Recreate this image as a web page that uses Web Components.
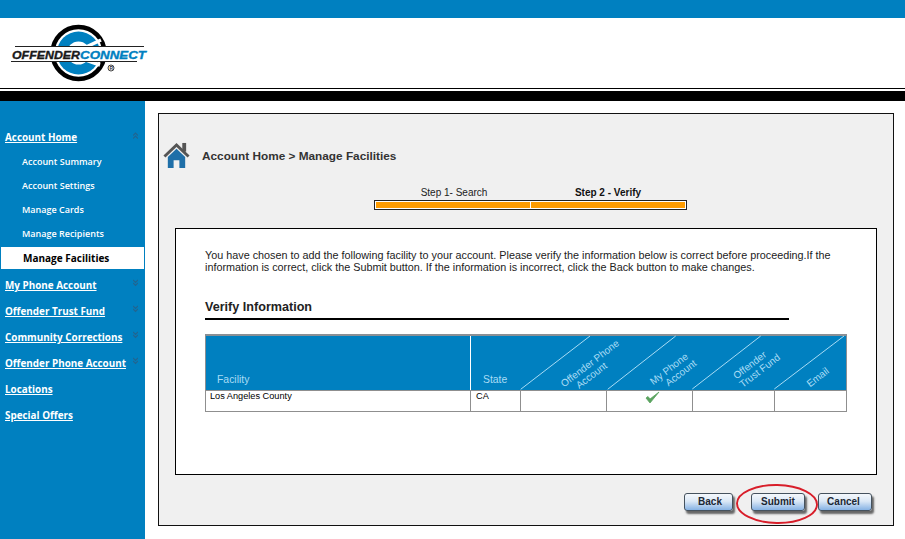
<!DOCTYPE html>
<html>
<head>
<meta charset="utf-8">
<title>Offender Connect</title>
<style>
  html, body { margin: 0; padding: 0; background: #fff; }
  body { width: 905px; height: 539px; overflow: hidden; font-family: "Liberation Sans", Arial, sans-serif; }
</style>
</head>
<body>
<oc-app>
  <oc-header slot="header"></oc-header>
  <oc-sidebar slot="nav">
    <oc-nav-item arrow="up">Account Home</oc-nav-item>
    <oc-nav-sub>Account Summary</oc-nav-sub>
    <oc-nav-sub>Account Settings</oc-nav-sub>
    <oc-nav-sub>Manage Cards</oc-nav-sub>
    <oc-nav-sub>Manage Recipients</oc-nav-sub>
    <oc-nav-sub active>Manage Facilities</oc-nav-sub>
    <oc-nav-item arrow="down">My Phone Account</oc-nav-item>
    <oc-nav-item arrow="down">Offender Trust Fund</oc-nav-item>
    <oc-nav-item arrow="down">Community Corrections</oc-nav-item>
    <oc-nav-item arrow="down">Offender Phone Account</oc-nav-item>
    <oc-nav-item>Locations</oc-nav-item>
    <oc-nav-item>Special Offers</oc-nav-item>
  </oc-sidebar>
  <oc-panel slot="main">
    <oc-steps></oc-steps>
    <oc-verify></oc-verify>
    <oc-actions></oc-actions>
  </oc-panel>
</oc-app>

<script>
// small helper, every element here is just a shadow root with fixed markup
function shadow(el, html) {
  el.attachShadow({ mode: "open" });
  el.shadowRoot.innerHTML = html;
}

class OcApp extends HTMLElement {
  connectedCallback() {
    shadow(this, `
      <style>
        :host { display: block; width: 905px; height: 539px; }
        .body { display: flex; height: 438px; }
      </style>
      <slot name="header"></slot>
      <div class="body">
        <slot name="nav"></slot>
        <slot name="main"></slot>
      </div>
    `);
  }
}

class OcHeader extends HTMLElement {
  connectedCallback() {
    shadow(this, `
      <style>
        :host { display: block; }
        .top { height: 18px; background: #0080c0; }
        .brand { height: 70px; box-sizing: border-box; padding: 0 0 0 7px; display: flex; align-items: flex-start; }
        .line { height: 1px; background: #000; }
        .gap { height: 2px; background: #fff; }
        .black { height: 10px; background: #000; }
        svg { display: block; }
        text { font-family: "Liberation Sans", Arial, sans-serif; font-weight: bold; font-style: italic; }
      </style>
      <div class="top"></div>
      <div class="brand">
        <svg width="148" height="70" viewBox="0 0 148 70">
          <circle cx="71.5" cy="35" r="26" fill="#fff" stroke="#000" stroke-width="4.5"/>
          <circle cx="71.5" cy="35" r="21.5" fill="#0080c0"/>
          <circle cx="71.5" cy="35" r="11.5" fill="#fff"/>
          <path d="M79 29L94 22M79 42L93 47" stroke="#fff" stroke-width="3.5" fill="none"/>
          <rect x="2" y="29" width="140" height="15" fill="#fff"/>
          <path d="M8 28.5H137M4 43.5H130" stroke="#222" stroke-width="1"/>
          <text x="5" y="41" font-size="11.5" fill="#1a1a1a" stroke="#1a1a1a" stroke-width=".35" textLength="68" lengthAdjust="spacingAndGlyphs">OFFENDER</text>
          <text x="73" y="41" font-size="11.5" fill="#0080c0" stroke="#0080c0" stroke-width=".35" textLength="66" lengthAdjust="spacingAndGlyphs">CONNECT</text>
          <circle cx="104" cy="50" r="3" fill="none" stroke="#444" stroke-width="1"/>
          <text x="102.4" y="52" font-size="5" fill="#333" style="font-style:normal">R</text>
        </svg>
      </div>
      <div class="line"></div>
      <div class="gap"></div>
      <div class="black"></div>
    `);
  }
}

class OcSidebar extends HTMLElement {
  connectedCallback() {
    shadow(this, `
      <style>
        :host { display: block; flex: 0 0 145px; height: 438px; background: #0080c0; box-sizing: border-box; padding-top: 23px; }
      </style>
      <slot></slot>
    `);
  }
}

class OcNavItem extends HTMLElement {
  connectedCallback() {
    const arrow = this.getAttribute("arrow");
    const d = arrow === "up" ? "M0 3.5L2.5 1L5 3.5M0 6.5L2.5 4L5 6.5" : "M0 1L2.5 3.5L5 1M0 4L2.5 6.5L5 4";
    const top = arrow === "up" ? 8 : 7;
    shadow(this, `
      <style>
        :host { display: flex; height: 26px; align-items: center; justify-content: space-between; padding: 0 7px 0 5px;
          font: bold 9.9px "Open Sans", Tahoma, sans-serif; color: #fff; position: relative; }
        a { color: #fff; text-decoration: underline; white-space: nowrap; }
        svg { position: absolute; right: 7px; top: ${top}px; }
      </style>
      <a href="#"><slot></slot></a>
      ${arrow ? `<svg width="5" height="8" viewBox="0 0 5 8"><path d="${d}" fill="none" stroke="#22648f" stroke-width="1.2"/></svg>` : ""}
    `);
  }
}

class OcNavSub extends HTMLElement {
  connectedCallback() {
    shadow(this, `
      <style>
        :host { display: flex; align-items: center; box-sizing: border-box; height: 24px; padding: 0 0 2px 22px; font: 600 9px "Open Sans", Tahoma, sans-serif; color: #fff; }
        :host([active]) { height: 22px; margin: 1px 1px 3px; padding: 0 0 0 22px; background: #fff; color: #000; font-weight: bold; font-size: 10px; }
      </style>
      <slot></slot>
    `);
  }
}

class OcPanel extends HTMLElement {
  connectedCallback() {
    shadow(this, `
      <style>
        :host { display: block; box-sizing: border-box; width: 736px; height: 413px; margin: 12px 0 0 13px;
          background: #f0f0f0; border: 1px solid #111; padding: 0 16px; }
        .crumb { display: flex; align-items: center; height: 83px; margin-left: -12px; font: bold 11.8px "Liberation Sans", Arial, sans-serif; color: #333; }
        .crumb svg { margin: 0 12px 0 0; display: block; }
      </style>
      <div class="crumb">
        <svg width="27" height="27" viewBox="0 0 28 28">
          <path d="M20 1h4v9h-4z" fill="#555"/>
          <path d="M1.5 15L14 3L26.5 15" fill="none" stroke="#555" stroke-width="3"/>
          <path d="M5 15.5L14 7L23 15.5V27H17V19H11V27H5Z" fill="#1f6fa8"/>
        </svg>
        Account Home &gt; Manage Facilities
      </div>
      <slot></slot>
    `);
  }
}

class OcSteps extends HTMLElement {
  connectedCallback() {
    shadow(this, `
      <style>
        :host { display: block; width: 313px; margin: -12px 0 0 199px; font: 10px "Liberation Sans", Arial, sans-serif; color: #222; }
        .labels { display: grid; grid-template-columns: 160px 148px; height: 14px; padding-bottom: 1px; align-items: center; text-align: center; }
        .b { font-weight: bold; color: #111; }
        .bar { display: flex; gap: 1px; height: 10px; box-sizing: border-box; border: 1px solid #222; background: #fff; padding: 1px; }
        .bar span { flex: 1; background: #ff9c00; }
      </style>
      <div class="labels"><span>Step 1- Search</span><span class="b">Step 2 - Verify</span></div>
      <div class="bar"><span></span><span></span></div>
    `);
  }
}

class OcVerify extends HTMLElement {
  connectedCallback() {
    shadow(this, `
      <style>
        :host { display: block; box-sizing: border-box; height: 247px; margin-top: 18px; background: #fff; border: 1px solid #000; padding: 21px 29px 0; font: 10px/11.5px "Liberation Sans", Arial, sans-serif; color: #222; }
        p { margin: 0; width: 640px; font-size: 10.8px; }
        h2 { margin: 26px 0 0; width: 584px; height: 21px; box-sizing: border-box; border-bottom: 2px solid #000; font: bold 12.6px/16px "Liberation Sans", Arial, sans-serif; color: #222; }
      </style>
      <p>You have chosen to add the following facility to your account. Please verify the information below is correct before proceeding.If the information is correct, click the Submit button. If the information is incorrect, click the Back button to make changes.</p>
      <h2>Verify Information</h2>
      <oc-facility-table></oc-facility-table>
    `);
  }
}

class OcFacilityTable extends HTMLElement {
  connectedCallback() {
    shadow(this, `
      <style>
        :host { display: block; position: relative; width: 642px; margin-top: 14px; font: 10.4px "Liberation Sans", Arial, sans-serif; }
        .head, .row { display: grid; grid-template-columns: 264px 50px 86px 86px 82px 72px; }
        .head { height: 56px; box-sizing: border-box; border: 1px solid #8a8f94; border-top-width: 2px; border-bottom: 0; background: #0080c0; color: #a9dcf5; }
        .head div { display: flex; align-items: flex-end; padding: 0 0 5px 11px; }
        .head .st { padding-left: 12px; border-left: 1px solid #fff; }
        .row { height: 22px; box-sizing: border-box; border: 1px solid #8f8f8f; font-size: 9.2px; color: #000; }
        .row div { border-left: 1px solid #8f8f8f; padding: 0 0 0 4px; line-height: 10px; position: relative; }
        .row div:first-child { border-left: 0; }
        .row .ca { padding-left: 5px; }
        svg.diag { position: absolute; left: 0; top: 0; pointer-events: none; overflow: visible; }
        svg.diag text { font-family: "Liberation Sans", Arial, sans-serif; font-size: 10px; fill: #a9dcf5; text-anchor: middle; }
        svg.check { position: absolute; left: 38px; top: 0; }
      </style>
      <div class="head"><div>Facility</div><div class="st">State</div><div></div><div></div><div></div><div></div></div>
      <div class="row">
        <div>Los Angeles County</div><div class="ca">CA</div><div></div>
        <div><svg class="check" width="15" height="14" viewBox="0 0 15 14"><path d="M1 7L5 12L14 1L5 8L3 5.5Z" fill="#5aa35f" stroke="#5aa35f" stroke-width=".8" stroke-linejoin="round"/></svg></div>
        <div></div><div></div>
      </div>
      <svg class="diag" width="642" height="56" viewBox="0 0 642 56">
        <path stroke="#a9dcf5" stroke-width="1" fill="none" d="M315.7 55.3L385 2M402.7 55.3L470.7 2M487.3 55L555.7 2M569.3 55L639 2"/>
        <text transform="translate(387 32) rotate(-37.5)"><tspan x="0" y="0">Offender Phone</tspan><tspan x="-6" y="10.5">Account</tspan></text>
        <text transform="translate(466 37.5) rotate(-37.5)"><tspan x="0" y="0">My Phone</tspan><tspan x="7" y="10.5">Account</tspan></text>
        <text transform="translate(546.8 33.8) rotate(-37.5)"><tspan x="0" y="0">Offender</tspan><tspan x="4.6" y="10.5">Trust Fund</tspan></text>
        <text transform="translate(614.8 46) rotate(-37.5)">Email</text>
      </svg>
    `);
  }
}

class OcActions extends HTMLElement {
  connectedCallback() {
    shadow(this, `
      <style>
        :host { display: flex; position: relative; justify-content: flex-end; padding: 18px 5px 0 0; }
        .back { --w: 49px; --pad-l: 3px; margin-right: 18px; }
        .submit { margin-right: 13px; }
        .cancel { --pad-r: 3px; }
        svg { position: absolute; left: 560px; top: 8px; transform: rotate(1deg); }
      </style>
      <oc-button class="back">Back</oc-button>
      <oc-button class="submit">Submit</oc-button>
      <oc-button class="cancel">Cancel</oc-button>
      <svg width="84" height="42" viewBox="0 0 84 42"><ellipse cx="42" cy="21" rx="40" ry="19" fill="none" stroke="#d81e2a" stroke-width="1.9"/></svg>
    `);
  }
}

class OcButton extends HTMLElement {
  connectedCallback() {
    shadow(this, `
      <style>
        :host { display: block; }
        button { display: block; width: var(--w, 54px); height: 18px; padding: 0 var(--pad-r, 0) 1px var(--pad-l, 0); border: 1px solid #45525e; border-radius: 3px;
          background: linear-gradient(#f4f8fc 0%, #dbe8f6 45%, #86b2e4 100%);
          box-shadow: 2px 3px 2px #666; font: bold 10px "Liberation Sans", Arial, sans-serif; color: #1c2733; }
      </style>
      <button><slot></slot></button>
    `);
  }
}

customElements.define("oc-app", OcApp);
customElements.define("oc-header", OcHeader);
customElements.define("oc-sidebar", OcSidebar);
customElements.define("oc-nav-item", OcNavItem);
customElements.define("oc-nav-sub", OcNavSub);
customElements.define("oc-panel", OcPanel);
customElements.define("oc-steps", OcSteps);
customElements.define("oc-verify", OcVerify);
customElements.define("oc-facility-table", OcFacilityTable);
customElements.define("oc-actions", OcActions);
customElements.define("oc-button", OcButton);
</script>
</body>
</html>
